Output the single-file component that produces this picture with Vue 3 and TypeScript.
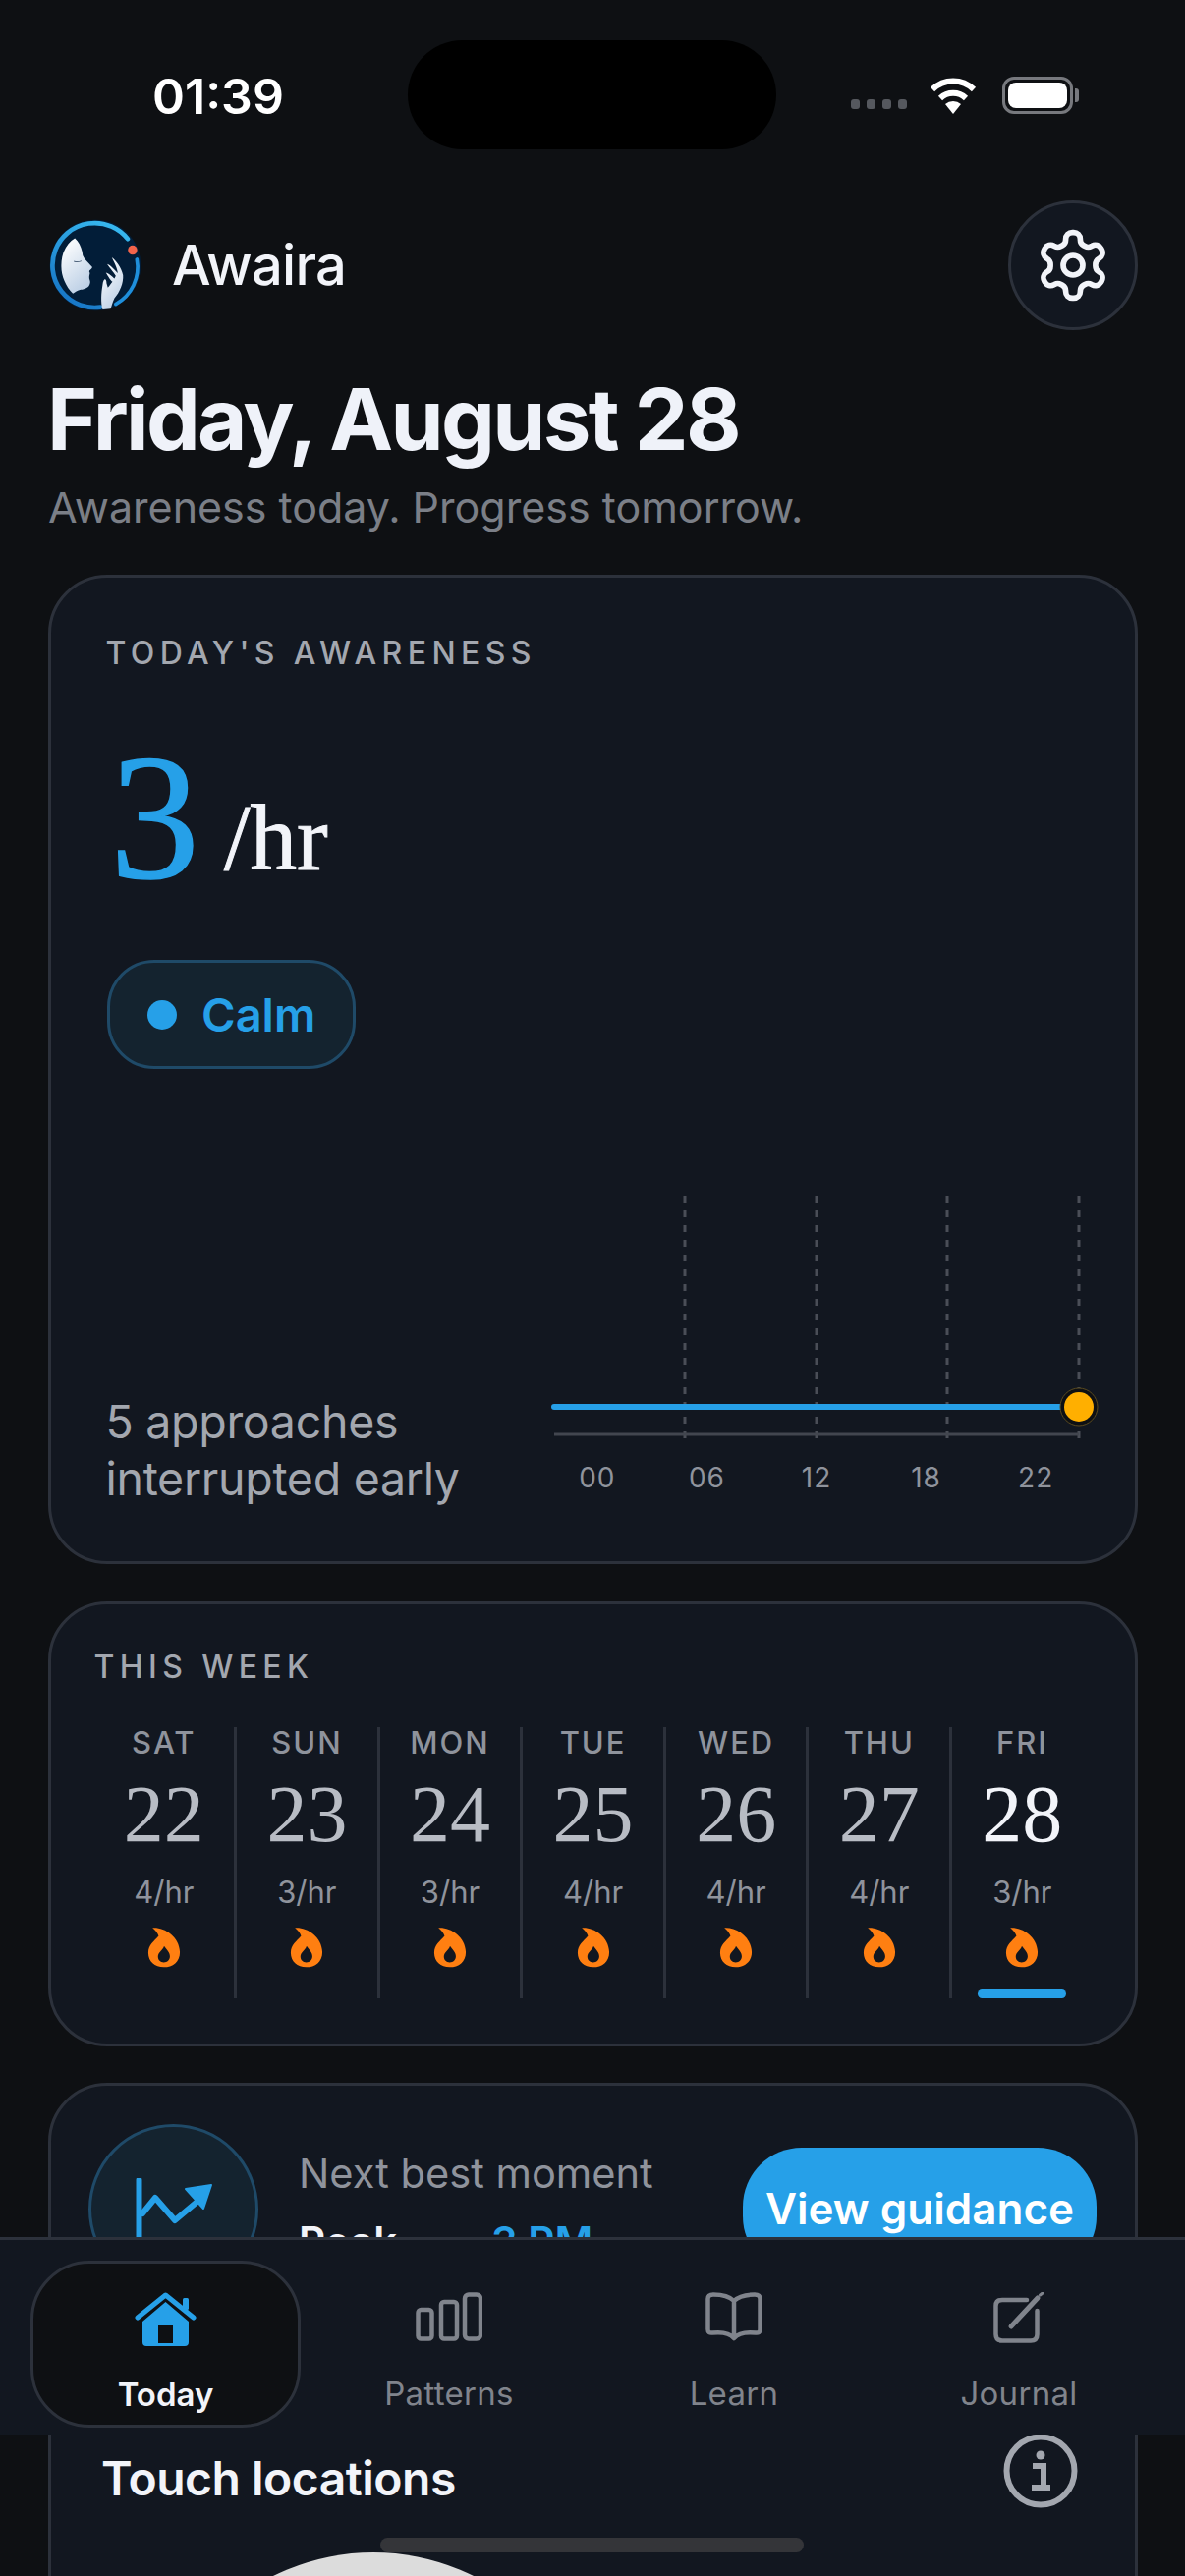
<script setup lang="ts">
interface Day { name: string; num: number; rate: number; active?: boolean }
const days: Day[] = [
  { name: 'SAT', num: 22, rate: 4 },
  { name: 'SUN', num: 23, rate: 3 },
  { name: 'MON', num: 24, rate: 3 },
  { name: 'TUE', num: 25, rate: 4 },
  { name: 'WED', num: 26, rate: 4 },
  { name: 'THU', num: 27, rate: 4 },
  { name: 'FRI', num: 28, rate: 3, active: true },
]
const hours: string[] = ['00', '06', '12', '18', '22']
const gridX: number[] = [133, 267, 400]
</script>

<template>
  <div class="page">
    <header class="status">
      <span class="time">01:39</span>
      <div class="status-right">
        <div class="signal"><i></i><i></i><i></i><i></i></div>
        <svg class="wifi" viewBox="0 0 50 38" width="50" height="38">
          <path d="M25 38 L17 28 A12 12 0 0 1 33 28 Z" fill="#fff" />
          <path d="M12 22 A19 19 0 0 1 38 22" fill="none" stroke="#fff" stroke-width="6" />
          <path d="M4 13 A30 30 0 0 1 46 13" fill="none" stroke="#fff" stroke-width="6" />
        </svg>
        <div class="battery"><div class="battery-fill"></div></div>
      </div>
    </header>
    <div class="island"></div>

    <main class="content">
      <div class="app-row">
        <div class="brand">
          <svg class="logo" viewBox="60 68 280 280" width="94" height="94">
            <defs>
              <linearGradient id="skin" x1="0.2" y1="0" x2="0.7" y2="1">
                <stop offset="0" stop-color="#ffffff" />
                <stop offset="1" stop-color="#b9cde4" />
              </linearGradient>
              <linearGradient id="ring" x1="0.7" y1="0" x2="0.2" y2="1">
                <stop offset="0" stop-color="#36b6ee" />
                <stop offset="1" stop-color="#1673c4" />
              </linearGradient>
            </defs>
            <circle cx="200" cy="208" r="138" fill="#021d38" />
            <path d="M298 128 A128 128 0 1 0 215 335" fill="none" stroke="url(#ring)" stroke-width="14" stroke-linecap="round" />
            <path d="M262 326 A128 128 0 0 0 326 190" fill="none" stroke="#1f8fdb" stroke-width="11" stroke-linecap="round" />
            <circle cx="313" cy="162" r="14" fill="#f4644b" />
            <path d="M138 126 C152 138 160 158 162 178 C168 192 184 204 191 214 C188 222 180 222 182 228 C186 234 180 238 182 244 C180 248 186 254 184 262 C182 276 168 280 156 282 C146 284 138 290 132 294 C110 272 96 240 97 208 C97 172 112 142 138 126 Z" fill="url(#skin)" />
            <path d="M135 196 Q146 200 158 195" fill="none" stroke="#51657d" stroke-width="3" />
            <path d="M222 342 C216 320 218 290 222 268 C224 246 234 246 234 262 L238 276 C244 270 248 262 252 258 C246 254 238 240 232 230 C238 230 254 244 258 248 L262 240 C254 226 240 212 236 204 C244 206 262 224 268 232 C268 220 256 196 250 184 C262 192 280 216 284 238 C286 262 274 290 258 308 C252 320 250 332 246 340 Z" fill="url(#skin)" />
          </svg>
          <span class="brand-name">Awaira</span>
        </div>
        <button class="gear">
          <svg viewBox="0 0 24 24" width="80" height="80" fill="none" stroke="#f2f4f9" stroke-width="1.7" stroke-linecap="round" stroke-linejoin="round">
            <path d="M12.22 2h-.44a2 2 0 0 0-2 2v.18a2 2 0 0 1-1 1.73l-.43.25a2 2 0 0 1-2 0l-.15-.08a2 2 0 0 0-2.73.73l-.22.38a2 2 0 0 0 .73 2.73l.15.1a2 2 0 0 1 1 1.72v.51a2 2 0 0 1-1 1.74l-.15.09a2 2 0 0 0-.73 2.73l.22.38a2 2 0 0 0 2.73.73l.15-.08a2 2 0 0 1 2 0l.43.25a2 2 0 0 1 1 1.73V20a2 2 0 0 0 2 2h.44a2 2 0 0 0 2-2v-.18a2 2 0 0 1 1-1.73l.43-.25a2 2 0 0 1 2 0l.15.08a2 2 0 0 0 2.73-.73l.22-.39a2 2 0 0 0-.73-2.73l-.15-.08a2 2 0 0 1-1-1.74v-.5a2 2 0 0 1 1-1.74l.15-.09a2 2 0 0 0 .73-2.73l-.22-.38a2 2 0 0 0-2.73-.73l-.15.08a2 2 0 0 1-2 0l-.43-.25a2 2 0 0 1-1-1.73V4a2 2 0 0 0-2-2z" />
            <circle cx="12" cy="12" r="3" />
          </svg>
        </button>
      </div>

      <h1 class="title">Friday, August 28</h1>
      <p class="subtitle">Awareness today. Progress tomorrow.</p>

      <section class="card today">
        <div class="eyebrow">TODAY'S AWARENESS</div>
        <div class="rate"><span class="rate-num">3</span><span class="rate-unit">/hr</span></div>
        <div class="pill"><span class="pill-dot"></span>Calm</div>
        <div class="today-bottom">
          <p class="approaches">5 approaches<br />interrupted early</p>
          <div class="chart">
            <svg class="chart-svg" viewBox="0 0 560 252" width="560" height="252">
              <line v-for="x in gridX" :key="x" :x1="x" y1="0" :x2="x" y2="248" stroke="#4a4e57" stroke-width="3" stroke-dasharray="7 8" />
              <line x1="534" y1="0" x2="534" y2="248" stroke="#4a4e57" stroke-width="3" stroke-dasharray="7 8" />
              <line x1="0" y1="243" x2="534" y2="243" stroke="#42464f" stroke-width="3" />
              <line x1="0" y1="215" x2="520" y2="215" stroke="#26a0e8" stroke-width="6" stroke-linecap="round" />
              <circle cx="534" cy="215" r="19" fill="#0e1013" stroke="#5a4a1f" stroke-width="1" />
              <circle cx="534" cy="215" r="15" fill="#ffaf00" />
            </svg>
            <div class="hours"><span v-for="h in hours" :key="h">{{ h }}</span></div>
          </div>
        </div>
      </section>

      <section class="card week">
        <div class="eyebrow">THIS WEEK</div>
        <div class="days">
          <div v-for="d in days" :key="d.name" class="day" :class="{ active: d.active }">
            <span class="day-name">{{ d.name }}</span>
            <span class="day-num">{{ d.num }}</span>
            <span class="day-rate">{{ d.rate }}/hr</span>
            <svg class="flame" viewBox="90 183 102 128" width="34" height="42">
              <path fill="#ff7f11" fill-rule="evenodd" d="M105 187 C140 184 188 212 190 262 C190 292 168 309 140 309 C112 309 92 292 92 264 C92 240 110 228 124 212 C122 204 114 194 105 187 Z M141 243 C138 256 122 262 122 276 C122 287 130 294 140 294 C151 294 159 286 159 275 C159 262 148 254 141 243 Z" />
            </svg>
            <span v-if="d.active" class="day-mark"></span>
          </div>
        </div>
      </section>

      <section class="card next">
        <div class="next-icon">
          <svg viewBox="0 0 80 80" width="80" height="80" fill="none" stroke="#26a0e8" stroke-width="6" stroke-linecap="round" stroke-linejoin="round">
            <path d="M4.5 2 V76 H78" />
            <path d="M8 36 L21 20 L41 43 L66 22" />
            <path d="M52 11 L78 7 L70 31 Z" fill="#26a0e8" stroke-width="2" />
          </svg>
        </div>
        <div class="next-text">
          <div class="next-label">Next best moment</div>
          <div class="next-value"><span>Peak</span><span class="next-time">3 PM</span></div>
        </div>
        <button class="cta"><span class="cta-text">View guidance</span></button>
      </section>

      <section class="card touch">
        <div class="touch-head">
          <h2 class="touch-title">Touch locations</h2>
          <svg class="info" viewBox="0 0 76 76" width="76" height="76" fill="none">
            <circle cx="38" cy="38" r="34.5" stroke="#a3a7af" stroke-width="6" />
            <circle cx="38" cy="22" r="4.5" fill="#a3a7af" />
            <path d="M30 33 H41 V54 M29 55 H48" stroke="#a3a7af" stroke-width="6" />
          </svg>
        </div>
        <div class="head-shape"></div>
      </section>
    </main>

    <nav class="tabbar">
      <div class="tab tab-on">
        <svg viewBox="0 0 63 55" width="63" height="55">
          <path d="M3 26 L31.5 3 L60 26" fill="none" stroke="#26a0e8" stroke-width="5" stroke-linecap="round" stroke-linejoin="round" />
          <rect x="49" y="6" width="6" height="12" rx="1.5" fill="#26a0e8" />
          <path fill="#26a0e8" fill-rule="evenodd" d="M31.5 10 L55 30 V51 Q55 55 51 55 H12 Q8 55 8 51 V30 Z M24 34 V52 H39 V34 Z" />
        </svg>
        <span>Today</span>
      </div>
      <div class="tab">
        <svg viewBox="0 0 68 50" width="68" height="50" fill="none" stroke="#80848c" stroke-width="4.5">
          <rect x="2.5" y="18" width="14" height="29.5" rx="3" />
          <rect x="26" y="10" width="16" height="37.5" rx="3" />
          <rect x="50" y="2.5" width="16" height="45" rx="4" />
        </svg>
        <span>Patterns</span>
      </div>
      <div class="tab">
        <svg viewBox="0 0 58 50" width="58" height="50" fill="none" stroke="#80848c" stroke-width="4.5" stroke-linejoin="round" stroke-linecap="round">
          <path d="M29 9 C24 4 17 2.5 8 2.5 Q2.5 2.5 2.5 7 V38 Q2.5 42 7 41.5 C16 40.5 24 41 29 47 C34 41 42 40.5 51 41.5 Q55.5 42 55.5 38 V7 Q55.5 2.5 50 2.5 C41 2.5 34 4 29 9 V44" />
        </svg>
        <span>Learn</span>
      </div>
      <div class="tab">
        <svg viewBox="0 0 52 52" width="52" height="52" fill="none" stroke="#80848c" stroke-width="4.5" stroke-linecap="round">
          <path d="M34 8 H9 Q2.5 8 2.5 14 V43 Q2.5 49.5 9 49.5 H38 Q44.5 49.5 44.5 43 V19" />
          <path d="M18 35 L45 6" stroke-width="5" />
          <path d="M47.5 3 L50 1" stroke-width="3" />
        </svg>
        <span>Journal</span>
      </div>
    </nav>

    <div class="home-bar"></div>
  </div>
</template>

<style>
html, body { margin: 0; background: #0e1013; }
</style>

<style scoped>
.page {
  position: relative;
  width: 1206px;
  height: 2622px;
  overflow: hidden;
  background: #0e1013;
  color: #f2f4f9;
  font-family: Inter, "Liberation Sans", sans-serif;
}
.status {
  height: 204px;
  box-sizing: border-box;
  padding: 73px 114px 0 155px;
  display: flex;
  justify-content: space-between;
  align-items: flex-start;
}
.time { font-size: 50px; line-height: 50px; font-weight: 600; color: #fff; }
.status-right { display: flex; align-items: center; margin-top: 5px; }
.signal { display: flex; gap: 7px; margin-top: 18px; margin-right: 22px; }
.signal i { width: 9px; height: 10px; border-radius: 3px; background: #55585e; }
.wifi { display: block; margin-right: 25px; }
.battery {
  position: relative;
  width: 72px;
  height: 38px;
  box-sizing: border-box;
  border: 3px solid #77797e;
  border-radius: 12px;
  padding: 3px;
}
.battery::after {
  content: "";
  position: absolute;
  right: -9px;
  top: 9px;
  width: 4px;
  height: 14px;
  border-radius: 0 3px 3px 0;
  background: #77797e;
}
.battery-fill { height: 100%; background: #fff; border-radius: 8px; }
.island {
  position: absolute;
  left: 415px;
  top: 41px;
  width: 375px;
  height: 111px;
  border-radius: 56px;
  background: #000;
}
.content { padding: 0 48px 0 49px; display: flex; flex-direction: column; }
.app-row { display: flex; justify-content: space-between; align-items: center; height: 132px; }
.brand { display: flex; align-items: center; gap: 31px; }
.logo { display: block; margin-left: 1px; }
.brand-name { font-size: 56px; font-weight: 500; letter-spacing: -0.7px; }
.gear {
  width: 132px;
  height: 132px;
  padding: 0;
  box-sizing: border-box;
  border-radius: 50%;
  border: 3px solid #2c313b;
  background: #121720;
  display: flex;
  align-items: center;
  justify-content: center;
}
.title {
  margin: 41px 0 0 -1px;
  font-size: 87px;
  line-height: 100px;
  font-weight: 700;
  letter-spacing: -2.7px;
  color: #eff2f9;
}
.subtitle {
  margin: 14px 0 0;
  font-size: 43px;
  line-height: 50px;
  color: #7b7f87;
}
.card {
  box-sizing: border-box;
  background: #121720;
  border: 3px solid #2c313b;
  border-radius: 60px;
}
.today { margin-top: 44px; height: 1007px; padding: 59px 57px 0 57px; display: flex; flex-direction: column; }
.eyebrow {
  font-size: 32px;
  line-height: 36px;
  font-weight: 500;
  letter-spacing: 5.4px;
  color: #a3a7af;
  margin-left: -1.5px;
}
.rate { display: flex; align-items: baseline; margin-top: 54px; height: 190px; font-family: "Liberation Serif", serif; }
.rate-num { font-size: 182px; line-height: 190px; color: #26a0e8; margin-left: 3px; -webkit-text-stroke: 1.5px #26a0e8; }
.rate-unit { font-size: 95px; line-height: 95px; color: #f2f4f9; margin-left: 25px; transform: translateY(-8px); -webkit-text-stroke: 1px #f2f4f9; }
.pill {
  margin-top: 50px;
  align-self: flex-start;
  width: 253px;
  height: 111px;
  box-sizing: border-box;
  border: 3px solid #1f4a68;
  border-radius: 48px;
  background: #14232f;
  display: flex;
  align-items: center;
  padding-left: 38px;
  gap: 25px;
  color: #26a0e8;
  font-size: 47px;
  font-weight: 600;
}
.pill-dot { width: 30px; height: 30px; border-radius: 50%; background: #26a0e8; }
.today-bottom { display: flex; justify-content: space-between; align-items: flex-end; margin-top: 129px; }
.approaches { margin: 0 0 -13px -1.5px; font-size: 46.5px; line-height: 58px; color: #a3a7af; letter-spacing: -0.3px; }
.chart { width: 580px; margin-right: -29px; }
.chart-svg { display: block; margin-left: 17px; overflow: visible; }
.hours {
  display: flex;
  margin-top: 18px;
  margin-left: 5px;
  width: 558px;
  justify-content: space-around;
  font-size: 28px;
  line-height: 34px;
  letter-spacing: 1px;
  color: #8f939c;
}
.hours span { width: 111.6px; text-align: center; }
.week { margin-top: 38px; height: 453px; padding: 46px 42px 0 43.5px; }
.week .eyebrow { margin-left: 0; }
.days { display: grid; grid-template-columns: repeat(7, 145.6px); margin-top: 43px; height: 276px; }
.day {
  position: relative;
  display: flex;
  flex-direction: column;
  align-items: center;
  box-sizing: border-box;
  border-right: 3px solid #2c313b;
}
.day:last-child { border-right-color: transparent; }
.day-name { font-size: 31px; line-height: 36px; font-weight: 500; letter-spacing: 2px; color: #8f939c; margin-top: -2px; }
.day-num { font-family: "Liberation Serif", serif; font-size: 82px; line-height: 90px; color: #b8bcc4; margin-top: 10px; }
.active .day-num { color: #f2f4f9; }
.day-rate { font-size: 31px; line-height: 38px; color: #8f939c; margin-top: 15px; }
.flame { display: block; margin-top: 16px; }
.day-mark { position: absolute; left: 26px; bottom: 0; width: 90px; height: 9px; border-radius: 5px; background: #26a0e8; }
.next {
  margin-top: 37px;
  height: 240px;
  padding: 0 39px 0 38px;
  display: flex;
  align-items: flex-start;
}
.next-icon {
  width: 173px;
  height: 173px;
  margin-top: 39px;
  box-sizing: border-box;
  border: 3px solid #1f4a68;
  border-radius: 50%;
  background: #14232f;
  display: flex;
  align-items: center;
  justify-content: center;
  flex: none;
}
.next-icon svg { margin-top: 16px; }
.next-text { margin: 64px 0 0 41px; flex: 1; }
.next-label { font-size: 41.6px; line-height: 50px; color: #8f939c; }
.next-value { display: flex; gap: 96px; font-size: 42px; line-height: 52px; font-weight: 600; margin-top: 19px; }
.next-time { color: #26a0e8; }
.cta {
  width: 360px;
  height: 130px;
  margin-top: 63px;
  border: 0;
  border-radius: 60px;
  background: #26a0e8;
  color: #fff;
  font-family: inherit;
  font-size: 44px;
  font-weight: 600;
  flex: none;
  padding: 0 0 6px;
}
.touch { margin-top: 38px; height: 400px; padding: 60px 58px 0 51px; position: relative; }
.touch-head { display: flex; justify-content: space-between; align-items: flex-start; }
.touch-title { margin: 33px 0 0; font-size: 48px; line-height: 58px; font-weight: 600; letter-spacing: -0.5px; color: #f2f4f9; }
.info { margin-top: 16px; }
.head-shape {
  position: absolute;
  left: 99px;
  top: 197px;
  width: 458px;
  height: 458px;
  border-radius: 50%;
  background: #dcdcdc;
}
.tabbar {
  position: absolute;
  left: 0;
  top: 2277px;
  width: 1206px;
  height: 201px;
  box-sizing: border-box;
  border-top: 3px solid #2c313b;
  background: #121720;
  display: grid;
  grid-template-columns: 275px 302px 278px 302px;
  padding: 21px 0 0 31px;
  align-items: start;
}
.tab {
  height: 170px;
  box-sizing: border-box;
  display: flex;
  flex-direction: column;
  align-items: center;
  justify-content: flex-start;
  padding-top: 32px;
  position: relative;
  color: #80848c;
  font-size: 33px;
}
.tab svg { display: block; }
.tab span { position: absolute; top: 115px; line-height: 40px; letter-spacing: 0.3px; }
.tab-on {
  border: 3px solid #2c313b;
  border-radius: 60px;
  background: #0e1013;
  color: #f2f4f9;
  font-weight: 600;
  font-size: 33px;
  padding-top: 29px;
}
.tab-on span { letter-spacing: 0; top: 113px; }
.home-bar {
  position: absolute;
  left: 387px;
  top: 2583px;
  width: 431px;
  height: 15px;
  border-radius: 8px;
  background: #343539;
}
</style>
